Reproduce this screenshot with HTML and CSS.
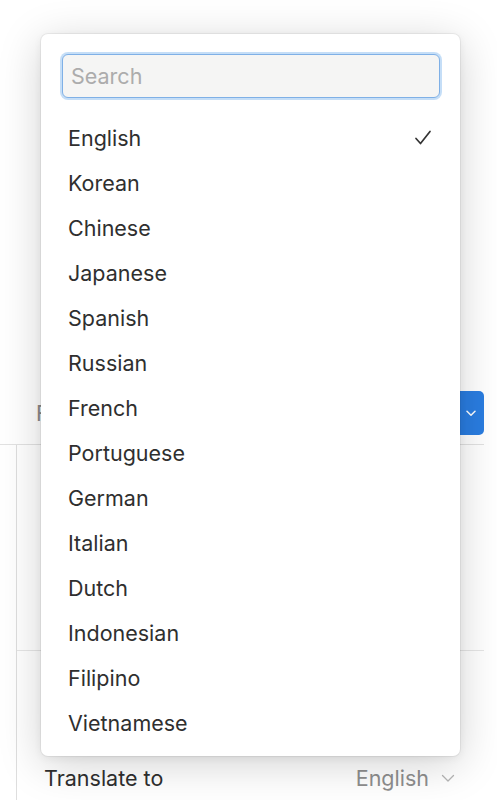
FILE: index.html
```html
<!DOCTYPE html>
<html>
<head>
<meta charset="utf-8">
<link rel="stylesheet" href="styles.css">
</head>
<body>
<div class="page">
  <div class="top-space"></div>
  <div class="font-row">
    <span class="font-label">Font</span>
    <button class="blue-select">Default
      <svg class="blue-chev" width="10" height="7" viewBox="0 0 10 7"><path d="M1 1.2 L5 5.2 L9 1.2" fill="none" stroke="#fff" stroke-width="1.5" stroke-linecap="round" stroke-linejoin="round"/></svg>
    </button>
  </div>
  <div class="divider"></div>
  <div class="section">
    <div class="sub-block"></div>
    <div class="auto-row"><span class="auto-label">Auto translate</span></div>
    <div class="translate-row">
      <span class="tr-label">Translate to</span>
      <span class="tr-value">English
        <svg width="14" height="9" viewBox="0 0 14 9"><path d="M1.5 1.5 L7 7 L12.5 1.5" fill="none" stroke="#b5b5b5" stroke-width="1.3" stroke-linecap="round" stroke-linejoin="round"/></svg>
      </span>
    </div>
  </div>
</div>

<div class="menu">
  <div class="search-wrap">
    <input class="search" type="text" placeholder="Search">
  </div>
  <ul class="list">
    <li class="item selected"><span>English</span>
      <svg class="check" width="18" height="16" viewBox="0 0 18 16"><path d="M2 8.5 L6.5 13.5 L16 1.5" fill="none" stroke="#333" stroke-width="1.7" stroke-linecap="round" stroke-linejoin="round"/></svg>
    </li>
    <li class="item">Korean</li>
    <li class="item">Chinese</li>
    <li class="item">Japanese</li>
    <li class="item">Spanish</li>
    <li class="item">Russian</li>
    <li class="item">French</li>
    <li class="item">Portuguese</li>
    <li class="item">German</li>
    <li class="item">Italian</li>
    <li class="item">Dutch</li>
    <li class="item">Indonesian</li>
    <li class="item">Filipino</li>
    <li class="item">Vietnamese</li>
  </ul>
</div>
</body>
</html>
```

FILE: styles.css
```css
html, body {
  margin: 0;
  padding: 0;
  background: #ffffff;
  font-family: Inter, "Noto Sans", sans-serif;
  color: #2f2f2f;
}

.page {
  width: 497px;
  height: 800px;
  overflow: hidden;
}

.top-space {
  height: 391px;
}

.font-row {
  height: 44px;
  display: flex;
  align-items: center;
  justify-content: space-between;
  padding-left: 36px;
  padding-right: 13px;
}

.font-label {
  font-size: 21.5px;
  color: #8a8a8a;
}

.blue-select {
  height: 44px;
  width: 110px;
  border: none;
  border-radius: 5px;
  background: #2a7de1;
  color: #fff;
  font-family: inherit;
  font-size: 18px;
  display: flex;
  align-items: center;
  justify-content: flex-end;
  gap: 10px;
  padding: 0 8px 0 12px;
}

.blue-chev {
  display: block;
}

.divider {
  margin-top: 9px;
  margin-right: 13px;
  border-top: 1px solid #e2e2e2;
}

.section {
  margin-left: 16px;
  border-left: 1.5px solid #dedede;
  height: 400px;
}

.sub-block {
  height: 205px;
  margin-right: 13px;
  border-bottom: 1px solid #e6e6e6;
}

.auto-row {
  height: 70px;
  display: flex;
  align-items: center;
  padding-left: 24px;
}

.auto-label {
  font-size: 21.5px;
}

.translate-row {
  height: 44px;
  display: flex;
  align-items: center;
  justify-content: space-between;
  padding-left: 27px;
  padding-right: 42px;
  margin-top: 35px;
}

.tr-label {
  font-size: 21.5px;
  color: #2f2f2f;
}

.tr-value {
  font-size: 21.5px;
  color: #8e8e8e;
  display: flex;
  align-items: center;
  gap: 12px;
}

.menu {
  position: absolute;
  left: 41px;
  top: 34px;
  width: 419px;
  height: 722px;
  box-sizing: border-box;
  background: #ffffff;
  border-radius: 7px;
  box-shadow: 0 0 0 1px rgba(0, 0, 0, 0.05), 0 8px 44px rgba(0, 0, 0, 0.18), 0 2px 8px rgba(0, 0, 0, 0.06);
  padding: 20px 20px 10px 21px;
}

.search-wrap {
  height: 44px;
}

.search {
  box-sizing: border-box;
  width: 378px;
  height: 44px;
  border: 1.5px solid #7fb0e6;
  border-radius: 6px;
  background: #f5f5f4;
  box-shadow: 0 0 0 2px rgba(150, 195, 240, 0.55);
  font-family: inherit;
  font-size: 21.5px;
  padding: 0 8px;
  color: #333;
  outline: none;
}

.search::placeholder {
  color: #acacac;
}

.list {
  list-style: none;
  margin: 17px 0 0 0;
  padding: 0;
}

.item {
  height: 45px;
  display: flex;
  align-items: center;
  justify-content: space-between;
  padding-left: 6px;
  padding-right: 8px;
  font-size: 21.5px;
  color: #2f2f2f;
}

.check {
  display: block;
}
```
